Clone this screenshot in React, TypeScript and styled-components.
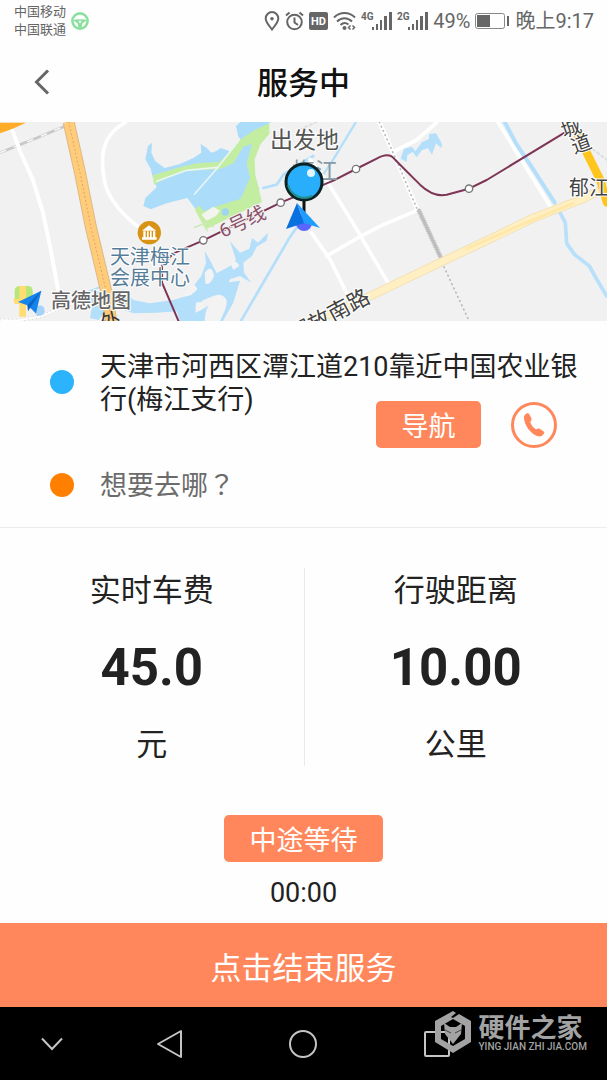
import React from "react";
import styled, { createGlobalStyle } from "styled-components";

const sans = `Roboto, "Noto Sans CJK SC", sans-serif`;
const coral = "#ff875b";
const ink = "#222";

const GlobalStyle = createGlobalStyle`
  * { box-sizing: border-box; }
  body { margin: 0; background: #fff; font-family: ${sans}; color: ${ink}; }
  button, input { font-family: inherit; }
`;

const Page = styled.main`
  display: flex;
  flex-direction: column;
  min-height: 100vh;
  background: #fefefe;
`;

const StatusBar = styled.div`
  display: flex;
  align-items: center;
  justify-content: space-between;
  height: 42px;
  padding: 0 13px 0 14px;
  color: #666;
`;

const StatusGroup = styled.div<{ $gap: number }>`
  display: flex;
  align-items: center;
  gap: ${(p) => p.$gap}px;
`;

const Carriers = styled.div`
  font-size: 13px;
  line-height: 18px;
`;

const StatusText = styled.span`
  font-size: 20px;
  line-height: 24px;
`;

const Header = styled.header`
  display: grid;
  grid-template-columns: 84px 1fr 84px;
  align-items: center;
  height: 80px;
`;

const BackButton = styled.button`
  display: flex;
  justify-content: center;
  padding: 0;
  border: 0;
  background: none;
  cursor: pointer;
`;

const Title = styled.h1`
  margin: 0;
  padding-top: 4px;
  text-align: center;
  font-size: 31px;
  line-height: 42px;
  font-weight: 500;
  color: #111;
`;

const MapArea = styled.section`
  height: 199px;
  overflow: hidden;
  background: #f1f1f1;
  svg { display: block; width: 100%; height: 100%; }
`;

const Ride = styled.section`
  padding: 30px 0 24px 50px;
  border-bottom: 1px solid #ececec;
`;

const Stop = styled.div`
  display: flex;
  align-items: center;
  gap: 26px;
  padding-right: 20px;
`;

const Dot = styled.span<{ $color: string }>`
  flex: none;
  width: 24px;
  height: 24px;
  margin-bottom: 4px;
  border-radius: 50%;
  background: ${(p) => p.$color};
`;

const Address = styled.p`
  margin: 0;
  font-size: 27px;
  line-height: 33px;
`;

const Destination = styled.input`
  flex: 1;
  min-width: 0;
  height: 33px;
  padding: 0;
  border: 0;
  outline: 0;
  background: none;
  font-family: Roboto, "Noto Sans CJK TC", sans-serif;
  font-size: 27px;
  line-height: 33px;
  color: ${ink};
  &::placeholder { color: #6b6b6b; opacity: 1; }
`;

const Actions = styled.div`
  display: flex;
  justify-content: flex-end;
  align-items: center;
  gap: 30px;
  margin: -16px 50px 22px 0;
`;

const PillButton = styled.button<{ $width: number }>`
  width: ${(p) => p.$width}px;
  height: 47px;
  padding: 6px 0 0;
  border: 0;
  border-radius: 5px;
  background: ${coral};
  color: #fff;
  font-size: 27px;
  line-height: 33px;
  cursor: pointer;
`;

const CallButton = styled.button`
  display: flex;
  align-items: center;
  justify-content: center;
  width: 46px;
  height: 46px;
  padding: 0;
  border: 3px solid ${coral};
  border-radius: 50%;
  background: none;
  cursor: pointer;
`;

const Stats = styled.section`
  display: grid;
  grid-template-columns: 1fr 1fr;
  padding: 40px 0 49px;
`;

const Stat = styled.div`
  display: flex;
  flex-direction: column;
  align-items: center;
  padding-top: 2px;
  gap: 26px;
  font-size: 31px;
  line-height: 42px;
  & + & { border-left: 1px solid #e9e9e9; }
`;

const StatValue = styled.strong`
  font-size: 51px;
  line-height: 60px;
  font-weight: 700;
`;

const Waiting = styled.section`
  display: flex;
  flex-direction: column;
  align-items: center;
  gap: 15px;
  padding-bottom: 13px;
`;

const Timer = styled.time`
  font-size: 27px;
  line-height: 33px;
`;

const EndButton = styled.button`
  height: 84px;
  padding: 8px 0 0;
  border: 0;
  background: ${coral};
  color: #fff;
  font-size: 31px;
  line-height: 42px;
  cursor: pointer;
`;

const NavBar = styled.nav`
  position: relative;
  flex: 1;
  display: grid;
  grid-template-columns: 17fr 22fr 22fr 22fr 17fr;
  min-height: 73px;
  background: #000;
`;

const NavButton = styled.button`
  display: flex;
  align-items: center;
  justify-content: center;
  padding: 0;
  border: 0;
  background: none;
  cursor: pointer;
`;

const Watermark = styled.div`
  position: absolute;
  top: 3px;
  right: 20px;
  display: flex;
  align-items: center;
  gap: 6px;
  color: #a3a3a3;
`;

const WatermarkText = styled.div`
  display: flex;
  flex-direction: column;
`;

const WatermarkName = styled.span`
  font-family: "Noto Sans CJK SC", sans-serif;
  font-size: 26px;
  line-height: 29px;
  font-weight: 700;
`;

const WatermarkUrl = styled.span`
  font-size: 10px;
  line-height: 14px;
  font-weight: 500;
`;

const Signal = ({ label }: { label: string }) => (
  <svg width="31" height="22" viewBox="0 0 31 22" fill="#666" aria-hidden="true">
    <text x="0" y="10" fontSize="10" fontWeight="700" fontFamily="Roboto, sans-serif">{label}</text>
    <rect x="11" y="17" width="2" height="3" />
    <rect x="15" y="14" width="2" height="6" />
    <rect x="19" y="10" width="2" height="10" />
    <rect x="23" y="6" width="3" height="14" />
    <rect x="28" y="2" width="3" height="18" />
  </svg>
);

const StatusIcons = () => (
  <>
    <svg width="16" height="20" viewBox="0 0 16 20" fill="none" stroke="#666" strokeWidth="2" aria-hidden="true">
      <path d="M8 18.5C5 14.5 1.7 11 1.7 7.4a6.3 6.3 0 0 1 12.6 0C14.300 11 11 14.500 8 18.500z" />
      <circle cx="8" cy="7.800" r="1.800" fill="#666" stroke="none" />
    </svg>
    <svg width="19" height="20" viewBox="0 0 19 20" fill="none" stroke="#666" strokeWidth="2" aria-hidden="true">
      <circle cx="9.500" cy="11" r="7.300" />
      <path d="M9.500 6.500V11.500L13 14M1 4.500L4.500 1.500M18 4.500L14.500 1.500" />
    </svg>
    <svg width="19" height="20" viewBox="0 0 19 20" aria-hidden="true">
      <rect x="0" y="1" width="19" height="18" rx="2" fill="#666" />
      <text x="9.500" y="14" textAnchor="middle" fontSize="11" fontWeight="700" fill="#fff" fontFamily="Roboto, sans-serif">HD</text>
    </svg>
    <svg width="23" height="20" viewBox="0 0 23 20" fill="none" stroke="#666" strokeWidth="2" aria-hidden="true">
      <path d="M1 6.500C7 .500 16 .500 22 6.500M4 10.500C8.500 6 14.500 6 19 10.500M7.500 14C10 11.500 13 11.500 15.500 13.500" />
      <circle cx="11.500" cy="17" r="2" fill="#666" stroke="none" />
      <path d="M17.500 14.500L15.500 16.500L17.500 18.500M19.500 14.500L21.500 16.500L19.500 18.500" strokeWidth="1.500" />
    </svg>
  </>
);

const Battery = () => (
  <svg width="35" height="18" viewBox="0 0 35 18" aria-hidden="true">
    <rect x=".5" y="1.500" width="29" height="15" rx="2" fill="none" stroke="#888" />
    <rect x="2" y="3" width="13" height="12" fill="#666" />
    <rect x="32" y="4" width="2" height="10" fill="#666" />
  </svg>
);

const SteeringWheel = () => (
  <svg width="18" height="18" viewBox="0 0 18 18" fill="none" stroke="#8be0a0" aria-hidden="true">
    <circle cx="9" cy="9" r="7.600" strokeWidth="2.600" />
    <path d="M2 8.200C5 6.800 13 6.800 16 8.200L11.500 11.500L10.500 16H7.500L6.500 11.500z" fill="#8be0a0" stroke="none" />
    <circle cx="9" cy="9.800" r="1.200" fill="#fff" stroke="none" />
  </svg>
);

const RouteMap = () => (
  <svg viewBox="0 0 607 199" preserveAspectRatio="xMidYMid slice" role="img" aria-label="地图">
    <rect width="607" height="199" fill="#f1f1f1" />
    <g transform="translate(0 -6) scale(.33333)" fill="none" strokeLinecap="round" strokeLinejoin="round">
      {/* lakes and streams */}
      <path d="M458 182L452 158L436 130L444 90L456 80L454 110L466 136L494 156L540 144L580 126L604 110L602 84L620 96L634 110L650 104L662 96L690 106L720 70L710 34L722 18H812L770 50L756 100L742 150L764 184L778 220L740 274L640 276L596 292L562 246L500 262L452 280L430 270L436 246L470 214z" fill="#abdcfa" />
      <path d="M458 178L530 156L590 142L656 138L688 112L716 74L760 44L808 22V54L782 84L764 130L766 176L786 258L720 290L630 334L616 340L584 280L598 268L610 286L660 268L722 248L750 186L740 140L756 84L730 92L700 142L660 160L560 164L494 190L462 206z" fill="#c3eda1" />
      <path d="M604 296L640 272L660 284L648 300L620 314z" fill="#f4f4ef" />
      <path d="M722 18L734 44L716 66L708 30z" fill="#abdcfa" />
      <circle cx="676" cy="288" r="11" fill="#9fd5ef" />
      <path d="M470 196L560 163L652 154M584 234L652 156M652 156L718 72" stroke="#eaf5f4" strokeWidth="5" />
      <path d="M584 334L620 320L640 332M604 310L622 344" stroke="#cdeab5" strokeWidth="5" />
      <path d="M790 216L830 206L850 176L890 150L940 120" stroke="#b4dffa" strokeWidth="8" />
      <path d="M1068 18L1000 130L960 190" stroke="#b4dffa" strokeWidth="7" />
      <path d="M900 320L868 366L722 616" stroke="#b4dffa" strokeWidth="8" />
      <path d="M330 530L370 520L400 552L450 562L520 552L560 540L580 510L604 480L618 440L614 404L634 440L650 472L690 450L708 432L690 376L720 410L748 398L756 366L774 380L804 350L800 374L770 392L756 420L730 440L732 470L754 500L720 480L690 490L676 530L640 540L610 552L590 570L580 616H540L530 586L470 590L400 592L340 570z" fill="#b4dffa" />
      <path d="M614 470Q636 442 642 480Q630 510 616 502zM560 520Q580 490 592 520Q570 546 552 540zM588 560Q610 552 612 576Q596 590 586 580zM690 440Q708 428 718 450L700 462z" fill="#f3f3f3" />
      <path d="M560 600L600 584L640 560L680 500L720 494L700 560L668 616H570z" fill="#b4dffa" />
      <path d="M614 616Q616 560 656 536Q690 540 676 580L660 616z" fill="#f3f3f3" />
      <path d="M250 530L300 510L340 556L296 612L270 606L276 570z" fill="#b4dffa" />
      <path d="M1202 128L1212 98L1236 92L1246 106L1266 78L1286 70L1288 54L1308 52L1326 84L1324 96L1308 82L1296 116L1284 96L1266 102L1250 124L1238 108L1222 118L1220 138z" fill="#b4dffa" />
      <path d="M1514 18L1548 82L1600 160L1664 260" stroke="#b4dffa" strokeWidth="12" />
      <path d="M1678 286L1696 320L1700 382L1724 416L1768 450L1788 486L1820 540" stroke="#b9e0fa" strokeWidth="11" />

      {/* railways */}
      <path d="M0 110L110 66L220 20" stroke="#c8c8c8" strokeWidth="8" />
      <path d="M0 110L110 66L220 20" stroke="#f4f4f4" strokeWidth="5" strokeDasharray="20 24" strokeLinecap="butt" />
      <path d="M0 612L50 614L120 602L220 560L300 520" stroke="#ccc" strokeWidth="9" strokeDasharray="3 9" strokeLinecap="butt" />
      <path d="M0 612L50 614L120 602L220 560L300 520" stroke="#fff" strokeWidth="5" />

      {/* minor roads */}
      <path d="M36 40L62 110L98 190L128 286L152 400L174 520L180 560" stroke="#fff" strokeWidth="12" />
      <path d="M376 20C300 60 300 130 316 206C326 246 370 300 412 330" stroke="#fff" strokeWidth="11" />
      <path d="M930 130L984 200L1070 340L1164 500M934 350L990 430L1044 540M980 420L1080 362L1150 326L1250 284M1186 104L1250 72L1310 20M1494 18L1650 270" stroke="#fff" strokeWidth="11" />
      <path d="M900 40L950 18M1766 90L1821 132" stroke="#d9dde0" strokeWidth="5" strokeDasharray="8 8" />
      <path d="M1138 18L1190 134L1250 276" stroke="#fff" strokeWidth="13" />
      <path d="M1138 18L1190 134L1250 276M1326 440L1368 530L1408 616" stroke="#b9b9b9" strokeWidth="5" strokeDasharray="2 12" />
      <path d="M1256 282L1322 424" stroke="#bdbdbd" strokeWidth="15" strokeDasharray="3 3" strokeLinecap="butt" />
      <path d="M1256 282L1322 424" stroke="#bdbdbd" strokeWidth="9" />

      {/* main roads */}
      <path d="M0 20H78L38 38L0 52z" fill="#ffac28" />
      <path d="M206 18L240 170L272 330L322 540L334 620" stroke="#ddb983" strokeWidth="36" strokeLinecap="butt" />
      <path d="M206 18L240 170L272 330L322 540L334 620" stroke="#ffcc7c" strokeWidth="30" strokeLinecap="butt" />
      <path d="M206 18L240 170L272 330L322 540L334 620" stroke="#d9a35f" strokeWidth="3" strokeDasharray="3 9" />
      <path d="M940 616L1120 536L1320 440L1480 364L1600 306L1740 252L1821 214" stroke="#f1dfae" strokeWidth="26" />
      <path d="M940 616L1120 536L1320 440L1480 364L1600 306L1740 252L1821 214" stroke="#ffefc2" strokeWidth="21" />
      <path d="M1400 398L1560 328L1720 262" stroke="#ffe7a7" strokeWidth="8" />
      <path d="M1724 40L1760 110L1800 190L1821 260" stroke="#ffc51d" strokeWidth="25" />

      {/* metro line 6 */}
      <path d="M536 616L486 500L486 450L520 412L610 373L842 260L1000 194L1068 159L1130 128Q1168 106 1186 132L1260 206Q1300 244 1340 236L1407 218L1460 192L1700 46" stroke="#7d3455" strokeWidth="6" />
      <g fill="#fff" stroke="#777" strokeWidth="4">
        <circle cx="610" cy="373" r="11" />
        <circle cx="842" cy="260" r="11" />
        <circle cx="1068" cy="159" r="11" />
        <circle cx="1407" cy="218" r="11" />
      </g>

      {/* museum marker */}
      <circle cx="448" cy="350" r="35" fill="#d89314" />
      <path d="M426 344L447 328L469 344zM430 346H437V366H430zM441 346H446V366H441zM450 346H455V366H450zM459 346H466V366H459zM426 364H470V371H426z" fill="#fff" />

      {/* map provider badge */}
      <path d="M44 524Q44 510 60 510H84Q98 510 98 526V556H44z" fill="#b6e77c" />
      <path d="M58 510H78V602H58zM40 548H110V564H44z" fill="#ffdd72" />
      <path d="M104 572Q134 560 134 586Q134 600 112 600L98 582z" fill="#a6d3fa" />
      <path d="M124 524L54 558L82 568L108 592z" fill="#1684ea" />
      <path d="M124 524L82 568L84 586z" fill="#0865c8" />
    </g>

    <g fontFamily={sans} fill="#555">
      <g fontSize="20" fill="#557d98" stroke="#fff" strokeWidth="2" paintOrder="stroke">
        <text x="110" y="142">天津梅江</text>
        <text x="110" y="163">会展中心</text>
      </g>
      <text x="51" y="186" fontSize="20" fontWeight="500" fill="#666" stroke="#fff" strokeWidth="2" paintOrder="stroke">高德地图</text>
      <text x="100" y="206" fontSize="20" fill="#333" transform="rotate(-12 110 198)">外</text>
      <text x="223" y="116" fontSize="19" fill="#8a5068" stroke="#f1f1f1" strokeWidth="2" paintOrder="stroke" transform="rotate(-25 223 116)">6号线</text>
      <text x="292" y="57" fontSize="23" fill="#8799a5">梅江</text>
      <text x="270" y="26" fontSize="23" stroke="#fff" strokeWidth="2" paintOrder="stroke">出发地</text>
      <text x="294" y="221" fontSize="22" fill="#444" stroke="#fff" strokeWidth="2" paintOrder="stroke" transform="rotate(-28 294 221)">解放南路</text>
      <g fontSize="20" fill="#444" stroke="#fff" strokeWidth="2" paintOrder="stroke">
        <text x="561" y="13" transform="rotate(-20 571 6)">城</text>
        <text x="571" y="29" transform="rotate(-20 581 21)">道</text>
        <text x="569" y="73">郁江</text>
      </g>
    </g>

    {/* vehicle position and pickup pin */}
    <circle cx="304" cy="101" r="8" fill="#5966ff" />
    <path d="M304 78V94" stroke="#111" strokeWidth="3" />
    <path d="M297 81L286 107L304 101z" fill="#0870df" />
    <path d="M297 81L304 101L320 106z" fill="#1f9dff" />
    <circle cx="304" cy="60" r="18" fill="#28aefa" stroke="#0b2224" strokeWidth="3" />
    <path d="M288 63A17 17 0 0 0 312 74" fill="none" stroke="#248f8c" strokeWidth="2" />
    <circle cx="311" cy="51" r="4" fill="#e0f5ff" />
  </svg>
);

const stats = [
  { label: "实时车费", value: "45.0", unit: "元" },
  { label: "行驶距离", value: "10.00", unit: "公里" },
];

export default function App() {
  return (
    <Page>
      <GlobalStyle />
      <StatusBar>
        <StatusGroup $gap={5}>
          <Carriers>
            <div>中国移动</div>
            <div>中国联通</div>
          </Carriers>
          <SteeringWheel />
        </StatusGroup>
        <StatusGroup $gap={5}>
          <StatusIcons />
          <Signal label="4G" />
          <Signal label="2G" />
          <StatusText>49%</StatusText>
          <Battery />
          <StatusText>晚上9:17</StatusText>
        </StatusGroup>
      </StatusBar>

      <Header>
        <BackButton type="button" aria-label="返回">
          <svg width="16" height="26" viewBox="0 0 16 26" fill="none" stroke="#666" strokeWidth="3">
            <path d="M14 1.500L2.500 13L14 24.500" />
          </svg>
        </BackButton>
        <Title>服务中</Title>
      </Header>

      <MapArea>
        <RouteMap />
      </MapArea>

      <Ride>
        <Stop>
          <Dot $color="#2bb3fb" />
          <Address>天津市河西区潭江道210靠近中国农业银行(梅江支行)</Address>
        </Stop>
        <Actions>
          <PillButton type="button" $width={105}>导航</PillButton>
          <CallButton type="button" aria-label="拨打电话">
            <svg width="24" height="26" viewBox="0 0 24 26" fill={coral} stroke={coral}>
              <path d="M2.500 4.500C3 2.500 5 1.200 6.500 1.800L9 6.500C9.500 8 8.500 9 7.700 10C8.500 13 11 16 14 18C15.500 17 16.500 16.600 18 17.400L21.800 20C22 22 20 24 17.500 24C10 23.500 2 13 2.500 4.500z" />
            </svg>
          </CallButton>
        </Actions>
        <Stop>
          <Dot $color="#ff8000" />
          <Destination type="text" placeholder="想要去哪？" aria-label="目的地" />
        </Stop>
      </Ride>

      <Stats>
        {stats.map((s) => (
          <Stat key={s.label}>
            <span>{s.label}</span>
            <StatValue>{s.value}</StatValue>
            <span>{s.unit}</span>
          </Stat>
        ))}
      </Stats>

      <Waiting>
        <PillButton type="button" $width={159}>中途等待</PillButton>
        <Timer>00:00</Timer>
      </Waiting>

      <EndButton type="button">点击结束服务</EndButton>

      <NavBar>
        <NavButton type="button" aria-label="收起">
          <svg width="24" height="14" viewBox="0 0 24 14" fill="none" stroke="#c4c4c4" strokeWidth="2">
            <path d="M2 1.500L12 12L22 1.500" />
          </svg>
        </NavButton>
        <NavButton type="button" aria-label="返回上一页">
          <svg width="28" height="30" viewBox="0 0 28 30" fill="none" stroke="#c4c4c4" strokeWidth="2" strokeLinejoin="round">
            <path d="M25 2V28L2 15z" />
          </svg>
        </NavButton>
        <NavButton type="button" aria-label="主屏幕">
          <svg width="30" height="30" viewBox="0 0 30 30" fill="none" stroke="#c4c4c4" strokeWidth="2">
            <circle cx="15" cy="15" r="13" />
          </svg>
        </NavButton>
        <NavButton type="button" aria-label="最近任务">
          <svg width="26" height="26" viewBox="0 0 26 26" fill="none" stroke="#c4c4c4" strokeWidth="2">
            <rect x="1" y="1" width="24" height="24" rx="1" />
          </svg>
        </NavButton>
        <Watermark>
          <svg width="38" height="44" viewBox="0 0 38 44" aria-hidden="true">
            <path d="M19 1L22 3L17 7L19 8L25 4L37 11V32L19 43L1 32V11zM19 9L7 16V29L19 36L31 29V16z" fill="currentColor" fillRule="evenodd" />
            <path d="M10 13L16 17H22L28 13L27 24L19 34L11 24z" fill="currentColor" />
            <path d="M11 20L17 23M27 20L21 23" stroke="#444" />
          </svg>
          <WatermarkText>
            <WatermarkName>硬件之家</WatermarkName>
            <WatermarkUrl>YING JIAN ZHI JIA.COM</WatermarkUrl>
          </WatermarkText>
        </Watermark>
      </NavBar>
    </Page>
  );
}
